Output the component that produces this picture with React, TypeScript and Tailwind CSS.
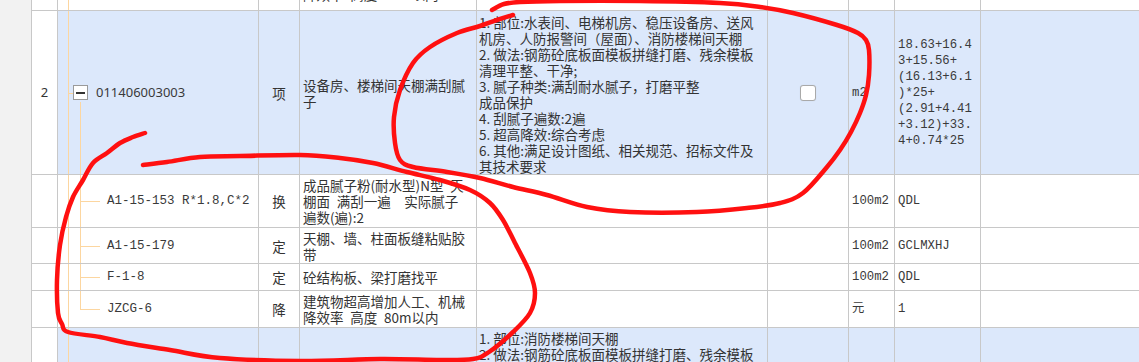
const cols = "grid grid-cols-[26px_201px_41px_177px_291px_81px_46px_86px_1fr]";
const line = "border-r border-[#c8c8c8]";
const cn = "font-['Noto_Sans_CJK_SC',sans-serif] text-[13.5px] leading-4 text-[#333]";
const mono = "font-['Liberation_Mono','Noto_Sans_CJK_SC',monospace] text-[12.3px] leading-4 text-[#3a3a3a]";
const blue = "bg-[#dce8fb]";
const trunk = "absolute left-[10px] top-0 bottom-0 w-px bg-[#fcd6a0]";

const features = [
  "1. 部位:水表间、电梯机房、稳压设备房、送风",
  "机房、人防报警间（屋面）、消防楼梯间天棚",
  "2. 做法:钢筋砼底板面模板拼缝打磨、残余模板",
  "清理平整、干净;",
  "3. 腻子种类:满刮耐水腻子，打磨平整",
  "成品保护",
  "4. 刮腻子遍数:2遍",
  "5. 超高降效:综合考虑",
  "6. 其他:满足设计图纸、相关规范、招标文件及",
  "其技术要求",
];

const expr = ["18.63+16.4", "3+15.56+", "(16.13+6.1", ")*25+", "(2.91+4.41", "+3.12)+33.", "4+0.74*25"];

const children = [
  { h: "h-[55px]", code: "A1-15-153 R*1.8,C*2", type: "换", desc: ["成品腻子粉(耐水型)N型\u2002天", "棚面\u2002满刮一遍\u2002\u2002实际腻子", "遍数(遍):2"], unit: "100m2", qty: "QDL" },
  { h: "h-[39px]", code: "A1-15-179", type: "定", desc: ["天棚、墙、柱面板缝粘贴胶", "带"], unit: "100m2", qty: "GCLMXHJ" },
  { h: "h-[28px]", code: "F-1-8", type: "定", desc: ["砼结构板、梁打磨找平"], unit: "100m2", qty: "QDL" },
  { h: "h-[39px]", code: "JZCG-6", type: "降", desc: ["建筑物超高增加人工、机械", "降效率\u2002高度\u200280m以内"], unit: "元", qty: "1", last: true },
];

function smooth(pts: number[][]) {
  let d = `M${pts[0][0]} ${pts[0][1]}`;
  for (let i = 0; i < pts.length - 1; i++) {
    const p0 = pts[i - 1] || pts[i];
    const p1 = pts[i];
    const p2 = pts[i + 1];
    const p3 = pts[i + 2] || p2;
    const c1x = p1[0] + (p2[0] - p0[0]) / 6;
    const c1y = p1[1] + (p2[1] - p0[1]) / 6;
    const c2x = p2[0] - (p3[0] - p1[0]) / 6;
    const c2y = p2[1] - (p3[1] - p1[1]) / 6;
    d += ` C${c1x.toFixed(1)} ${c1y.toFixed(1)} ${c2x.toFixed(1)} ${c2y.toFixed(1)} ${p2[0]} ${p2[1]}`;
  }
  return d;
}

const loop = [
  [513, 15], [497, 20], [480, 26], [457, 33], [430, 47], [413, 63], [400, 90], [394, 117], [395, 143], [400, 160],
  [413, 167], [447, 172], [480, 178], [513, 187], [547, 195], [587, 207], [630, 212], [697, 212], [747, 208], [780, 203],
  [803, 193], [827, 167], [840, 150], [851, 132], [860, 113], [866, 95], [869, 75], [869, 50], [866, 40], [858, 33],
  [837, 25], [793, 13], [760, 7], [720, 3], [640, 1], [560, 1], [520, 2], [504, 4], [492, 10],
];

const swirl = [
  [145, 133], [133, 137], [120, 143], [107, 153], [93, 163], [83, 180], [73, 197], [66, 217], [60, 245], [57, 280],
  [58, 313], [62, 324], [68, 332], [100, 337], [127, 343], [170, 350], [220, 358], [300, 361], [380, 359], [440, 360],
  [473, 359], [489, 352], [513, 332], [530, 313], [535, 293], [530, 273], [515, 243], [503, 220], [490, 203], [470, 190],
  [440, 180], [407, 172], [373, 163], [340, 158], [300, 155], [240, 156], [200, 157], [167, 162], [143, 165],
];

function Scribble() {
  return (
    <svg className="absolute inset-0 pointer-events-none" width={1139} height={362} viewBox="0 0 1139 362">
      <g fill="none" stroke="#ff1010" strokeWidth={4.5} strokeLinecap="round" strokeLinejoin="round">
        <path d={smooth(loop)} />
        <path d={smooth(swirl)} />
      </g>
    </svg>
  );
}

const Lines = ({ items }: { items: string[] }) => (
  <div>
    {items.map((t, i) => (
      <div key={i} className="whitespace-pre">
        {t}
      </div>
    ))}
  </div>
);

export default function App() {
  return (
    <div className="relative w-[1139px] h-[362px] overflow-hidden bg-white flex">
      <div className="w-[32px] shrink-0 bg-[#f2f2f2] border-r border-[#c8c8c8]" />
      <div className="flex-1 flex flex-col">
        {/* tail of previous item */}
        <div className={`${cols} h-[12px] border-b border-[#c8c8c8] overflow-hidden`}>
          <div className={line} />
          <div className={`${line} relative`}>
            <div className={trunk} />
          </div>
          <div className={line} />
          <div className={`${line} ${cn} flex items-end pl-[3px] pb-[8px] overflow-hidden`}>
            <div className="whitespace-pre">降效率{"\u2002"}高度{"\u2002"}80m以内</div>
          </div>
          <div className={line} />
          <div className={line} />
          <div className={line} />
          <div className={line} />
          <div />
        </div>

        {/* item 2 */}
        <div className={`${cols} h-[169px] border-b border-[#c8c8c8]`}>
          <div className={`${line} flex items-center justify-center font-['Noto_Sans',sans-serif] text-[13px] text-[#333]`}>2</div>
          <div className={`${line} ${blue} relative flex items-center pl-[15px]`}>
            <div className={trunk} />
            <div className="absolute left-[10px] top-1/2 w-[5px] h-px bg-[#fcd6a0]" />
            <div className="absolute left-[22px] top-[91px] bottom-0 w-px bg-[#fcd6a0]" />
            <div className="relative w-[15px] h-[15px] border border-[#9a9a9a] bg-white flex items-center justify-center">
              <div className="w-[9px] h-[2px] bg-[#333]" />
            </div>
            <span className="ml-[8px] font-['Noto_Sans',sans-serif] text-[13px] text-[#3a3a3a]">011406003003</span>
          </div>
          <div className={`${line} ${blue} ${cn} flex items-center justify-center`}>项</div>
          <div className={`${line} ${blue} ${cn} flex items-center pl-[3px]`}>
            <Lines items={["设备房、楼梯间天棚满刮腻", "子"]} />
          </div>
          <div className={`${line} ${blue} ${cn} pl-[2px] pt-[3px]`}>
            <Lines items={features} />
          </div>
          <div className={`${line} ${blue} flex items-center justify-center`}>
            <div className="w-4 h-4 rounded-[3px] border border-[#a9a9a9] bg-white shadow-[0_0_1px_rgba(0,0,0,0.15)]" />
          </div>
          <div className={`${line} ${blue} ${mono} flex items-center pl-[3px]`}>m2</div>
          <div className={`${line} ${blue} ${mono} flex items-center pl-[3px]`}>
            <Lines items={expr} />
          </div>
          <div className={blue} />
        </div>

        {children.map((c) => (
          <div key={c.code} className={`${cols} ${c.h} border-b border-[#c8c8c8]`}>
            <div className={line} />
            <div className={`${line} relative flex items-center pl-[49px]`}>
              <div className={trunk} />
              <div className={`absolute left-[22px] top-0 w-px bg-[#fcd6a0] ${c.last ? "h-1/2" : "bottom-0"}`} />
              <div className="absolute left-[22px] top-1/2 w-[20px] h-px bg-[#fcd6a0]" />
              <span className={`${mono} text-[12.5px] whitespace-pre`}>{c.code}</span>
            </div>
            <div className={`${line} ${cn} flex items-center justify-center`}>{c.type}</div>
            <div className={`${line} ${cn} flex items-center pl-[3px]`}>
              <Lines items={c.desc} />
            </div>
            <div className={line} />
            <div className={line} />
            <div className={`${line} ${mono} flex items-center pl-[3px]`}>{c.unit}</div>
            <div className={`${line} ${mono} flex items-center pl-[3px]`}>{c.qty}</div>
            <div />
          </div>
        ))}

        {/* next item, cut off */}
        <div className={`${cols} flex-1`}>
          <div className={line} />
          <div className={`${line} ${blue} relative`}>
            <div className={trunk} />
          </div>
          <div className={`${line} ${blue}`} />
          <div className={`${line} ${blue}`} />
          <div className={`${line} ${blue} ${cn} pl-[2px] pt-[2px]`}>
            <Lines items={["1. 部位:消防楼梯间天棚", "2. 做法:钢筋砼底板面模板拼缝打磨、残余模板"]} />
          </div>
          <div className={`${line} ${blue}`} />
          <div className={`${line} ${blue}`} />
          <div className={`${line} ${blue}`} />
          <div className={blue} />
        </div>
      </div>
      <Scribble />
    </div>
  );
}
